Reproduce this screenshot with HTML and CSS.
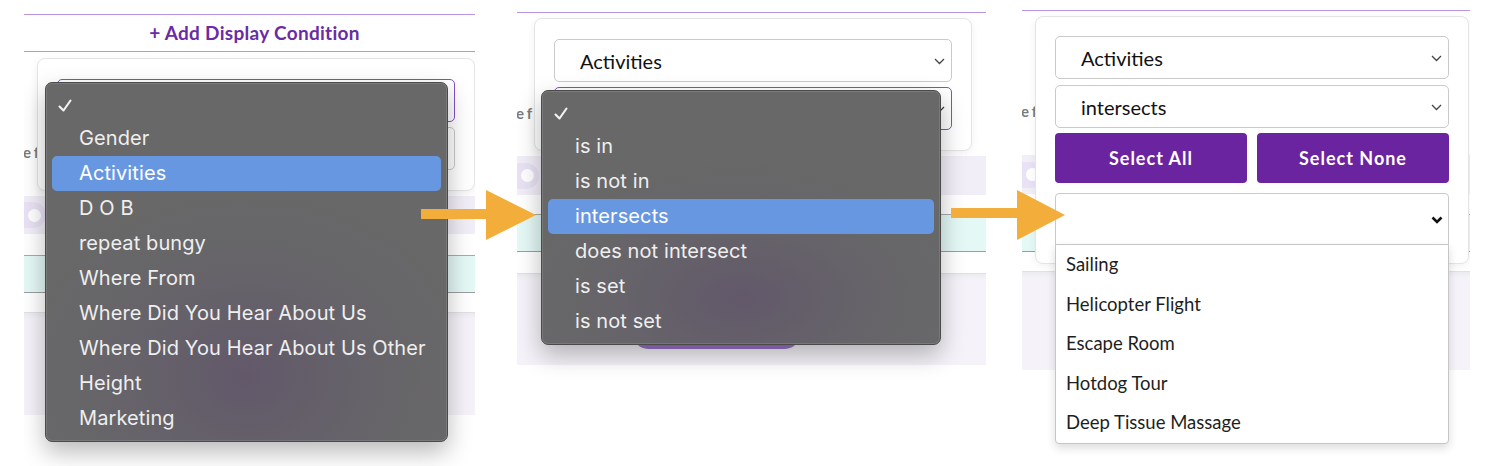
FILE: index.html
```html
<!DOCTYPE html>
<html lang="en">
<head>
    <meta charset="UTF-8">
    <meta name="viewport" content="width=device-width, initial-scale=1.0">
    <title>Display Conditions</title>
    <link rel="stylesheet" href="styles.css">
</head>
<body>
<div class="strip">

    <!-- 1. choose the field -->
    <section class="shot shot-field">
        <div class="rule"></div>
        <div class="add-condition">+ Add Display Condition</div>
        <div class="rule"></div>
        <div class="field-row"><span class="field-label">e f</span></div>
        <div class="toggle-band"><span class="toggle"><span class="knob"></span></span></div>
        <div class="info-band"></div>
        <div class="footer"><span class="save-btn"></span></div>

        <div class="popover">
            <div class="select is-focused">
                <svg class="chevron" width="11" height="7" viewBox="0 0 11 7"><path d="M1 1l4.5 4.5L10 1" fill="none" stroke="#444" stroke-width="1.3"/></svg>
            </div>
            <div class="select">
                <svg class="chevron" width="11" height="7" viewBox="0 0 11 7"><path d="M1 1l4.5 4.5L10 1" fill="none" stroke="#444" stroke-width="1.3"/></svg>
            </div>
        </div>

        <div class="menu">
            <div class="menu-item"><svg class="check" width="14" height="13" viewBox="0 0 14 13"><path d="M1.5 7.5L5.5 11.5 12.5 1.5" fill="none" stroke="#f4f4f4" stroke-width="2.1" stroke-linecap="round" stroke-linejoin="round"/></svg></div>
            <div class="menu-item">Gender</div>
            <div class="menu-item is-active">Activities</div>
            <div class="menu-item">D O B</div>
            <div class="menu-item">repeat bungy</div>
            <div class="menu-item">Where From</div>
            <div class="menu-item">Where Did You Hear About Us</div>
            <div class="menu-item">Where Did You Hear About Us Other</div>
            <div class="menu-item">Height</div>
            <div class="menu-item">Marketing</div>
        </div>
    </section>

    <!-- 2. choose the operator -->
    <section class="shot shot-operator">
        <div class="rule"></div>
        <div class="field-row"><span class="field-label">e f</span></div>
        <div class="toggle-band"><span class="toggle"><span class="knob"></span></span></div>
        <div class="info-band"></div>
        <div class="footer"><span class="save-btn"></span></div>

        <div class="popover">
            <div class="select">Activities
                <svg class="chevron" width="11" height="7" viewBox="0 0 11 7"><path d="M1 1l4.5 4.5L10 1" fill="none" stroke="#444" stroke-width="1.3"/></svg>
            </div>
            <div class="select is-focused">
                <svg class="chevron" width="11" height="7" viewBox="0 0 11 7"><path d="M1 1l4.5 4.5L10 1" fill="none" stroke="#444" stroke-width="1.3"/></svg>
            </div>
        </div>

        <div class="menu">
            <div class="menu-item"><svg class="check" width="14" height="13" viewBox="0 0 14 13"><path d="M1.5 7.5L5.5 11.5 12.5 1.5" fill="none" stroke="#f4f4f4" stroke-width="2.1" stroke-linecap="round" stroke-linejoin="round"/></svg></div>
            <div class="menu-item">is in</div>
            <div class="menu-item">is not in</div>
            <div class="menu-item is-active">intersects</div>
            <div class="menu-item">does not intersect</div>
            <div class="menu-item">is set</div>
            <div class="menu-item">is not set</div>
        </div>
    </section>

    <!-- 3. choose the values -->
    <section class="shot shot-values">
        <div class="rule"></div>
        <div class="field-row"><span class="field-label">e f</span></div>
        <div class="toggle-band"><span class="toggle"><span class="knob"></span></span></div>
        <div class="info-band"></div>
        <div class="footer"><span class="save-btn"></span></div>

        <div class="popover">
            <div class="select">Activities
                <svg class="chevron" width="11" height="7" viewBox="0 0 11 7"><path d="M1 1l4.5 4.5L10 1" fill="none" stroke="#444" stroke-width="1.3"/></svg>
            </div>
            <div class="select">intersects
                <svg class="chevron" width="11" height="7" viewBox="0 0 11 7"><path d="M1 1l4.5 4.5L10 1" fill="none" stroke="#444" stroke-width="1.3"/></svg>
            </div>
            <div class="button-row">
                <button class="pick-btn">Select All</button>
                <button class="pick-btn">Select None</button>
            </div>
            <div class="select value-select">
                <svg class="chevron chevron-bold" width="12" height="8" viewBox="0 0 12 8"><path d="M1.5 1.5l4.5 4.5 4.5-4.5" fill="none" stroke="#111" stroke-width="2.6"/></svg>
                <ul class="value-list">
                    <li>Sailing</li>
                    <li>Helicopter Flight</li>
                    <li>Escape Room</li>
                    <li>Hotdog Tour</li>
                    <li>Deep Tissue Massage</li>
                </ul>
            </div>
        </div>
    </section>

    <!-- arrows between the steps -->
    <svg class="arrow arrow-one" width="115" height="50" viewBox="0 0 115 50"><rect x="0" y="19" width="67" height="10" fill="#f3ad3b"/><path d="M65 0L115 25 65 50z" fill="#f3ad3b"/></svg>
    <svg class="arrow arrow-two" width="115" height="50" viewBox="0 0 115 50"><rect x="0" y="18" width="67" height="10" fill="#f3ad3b"/><path d="M66 0L114 25 66 50z" fill="#f3ad3b"/></svg>
</div>
</body>
</html>
```

FILE: styles.css
```css
* {
  box-sizing: border-box;
}

body {
  margin: 0;
  background-color: #fff;
  font-family: "Lato", sans-serif;
}

.strip {
  position: relative;
  display: flex;
  height: 466px;
  padding-left: 24px;
  overflow: hidden;
}

.shot {
  position: relative;
  flex: none;
  height: 100%;
  overflow: hidden;
}

.shot-field {
  width: 451px;
  padding-top: 14px;
}

.shot-operator {
  width: 469px;
  margin-left: 42px;
  padding-top: 12px;
}

.shot-values {
  width: 448px;
  margin-left: 36px;
  padding-top: 10px;
}

.rule {
  height: 1px;
  background-color: #ba95dd;
}

.add-condition {
  height: 36px;
  padding-left: 10px;
  line-height: 36px;
  text-align: center;
  font-size: 19px;
  font-weight: 700;
  letter-spacing: 0.3px;
  color: #6a2ca5;
}

/* page behind the popover */
.field-row {
  height: 144px;
  padding-top: 90px;
}

.shot-operator .field-row {
  height: 143px;
}

.field-label {
  display: block;
  margin-left: -1px;
  font-size: 15px;
  line-height: 20px;
  font-weight: 700;
  word-spacing: -1px;
  color: #7c7c7c;
  white-space: nowrap;
}

.toggle-band {
  display: flex;
  align-items: center;
  height: 39px;
  background-color: #f2eef8;
}

.shot-field .toggle-band {
  height: 38px;
}

.toggle {
  display: flex;
  align-items: center;
  justify-content: flex-end;
  width: 36px;
  height: 26px;
  margin-left: -14px;
  padding-right: 5px;
  border-radius: 13px;
  background-color: #e9e2f4;
}

.knob {
  width: 13px;
  height: 13px;
  border-radius: 50%;
  background-color: #fff;
}

.info-band {
  height: 38px;
  margin-top: 19px;
  background-color: #e4f8f6;
  border-top: 1px solid #a6aaac;
  border-bottom: 1px solid #9a9ea0;
}

.shot-field .info-band {
  margin-top: 21px;
}

.shot-values .info-band {
  margin-top: 20px;
}

.footer {
  height: 92px;
  margin-top: 21px;
  padding: 44px 0 0 116px;
  border-top: 1px solid #e2e0e6;
  background: linear-gradient(#ecebef, #f5f3f9 6px);
}

.shot-field .footer {
  height: 103px;
  margin-top: 19px;
  padding-top: 47px;
}

.shot-values .footer {
  height: 99px;
  margin-top: 19px;
}

.save-btn {
  display: block;
  width: 167px;
  height: 31px;
  border-radius: 15px;
  background-color: #9a72c6;
}

/* condition popover */
.popover {
  position: absolute;
  display: flex;
  flex-direction: column;
  gap: 5px;
  padding: 20px 19px;
  background-color: #fff;
  border: 1px solid #e4e4e4;
  border-radius: 8px;
  box-shadow: 0 2px 8px rgba(0, 0, 0, 0.06);
}

.shot-field .popover {
  left: 13px;
  top: 58px;
  width: 438px;
}

.shot-operator .popover {
  left: 17px;
  top: 18px;
  width: 438px;
}

.shot-values .popover {
  left: 13px;
  top: 16px;
  width: 434px;
  padding: 19px 19px 18px;
}

.select {
  position: relative;
  display: flex;
  align-items: center;
  height: 43px;
  padding-left: 25px;
  border: 1px solid #cacaca;
  border-radius: 5px;
  background-color: #fff;
  font-size: 20px;
  color: #111;
}

.shot-values .select + .select {
  margin-top: 1px;
}

.select.is-focused {
  border-color: #8450c6;
}

.chevron {
  position: absolute;
  right: 6px;
  top: 50%;
  margin-top: -3px;
}

.chevron-bold {
  right: 5px;
  margin-top: -3px;
}

.button-row {
  display: flex;
  gap: 10px;
}

.pick-btn {
  flex: 1;
  height: 50px;
  border: none;
  border-radius: 4px;
  background-color: #6b24a0;
  color: #fff;
  font-family: "Lato", sans-serif;
  font-size: 18px;
  font-weight: 700;
  letter-spacing: 1px;
}

.value-select {
  height: 52px;
  margin-top: 5px;
  border-radius: 4px 4px 0 0;
}

.value-list {
  position: absolute;
  left: -1px;
  right: -1px;
  top: 50px;
  margin: 0;
  padding: 0;
  list-style: none;
  background-color: #fff;
  border: 1px solid #c6c6c6;
  border-radius: 0 0 4px 4px;
  box-shadow: 0 4px 10px rgba(0, 0, 0, 0.14);
}

.value-list li {
  height: 39.6px;
  line-height: 39.6px;
  padding-left: 10px;
  font-size: 18.5px;
  color: #1e1e1e;
}

/* native popup menu */
.menu {
  position: absolute;
  z-index: 2;
  padding: 3px 6px 5px;
  border: 1px solid #4a4a4a;
  border-radius: 7px;
  background: radial-gradient(ellipse 60% 55% at 50% 82%, #62586a 0%, #666469 55%, #686868 100%);
  box-shadow: inset 0 0 0 1px rgba(255, 255, 255, 0.12), 0 10px 24px rgba(0, 0, 0, 0.28);
  font-family: "Inter", sans-serif;
  font-size: 20px;
  letter-spacing: 0.1px;
  color: #efefef;
}

.shot-field .menu {
  left: 21px;
  top: 82px;
  width: 403px;
}

.shot-operator .menu {
  left: 24px;
  top: 90px;
  width: 400px;
}

.menu-item {
  position: relative;
  height: 35px;
  line-height: 35px;
  padding-left: 27px;
  border-radius: 5px;
  white-space: nowrap;
}

.menu-item.is-active {
  background-color: #6797e1;
  color: #fff;
}

.check {
  position: absolute;
  left: 6px;
  top: 13px;
}

.arrow {
  position: absolute;
  z-index: 3;
  top: 190px;
}

.arrow-one {
  left: 421px;
}

.arrow-two {
  left: 951px;
}
```
